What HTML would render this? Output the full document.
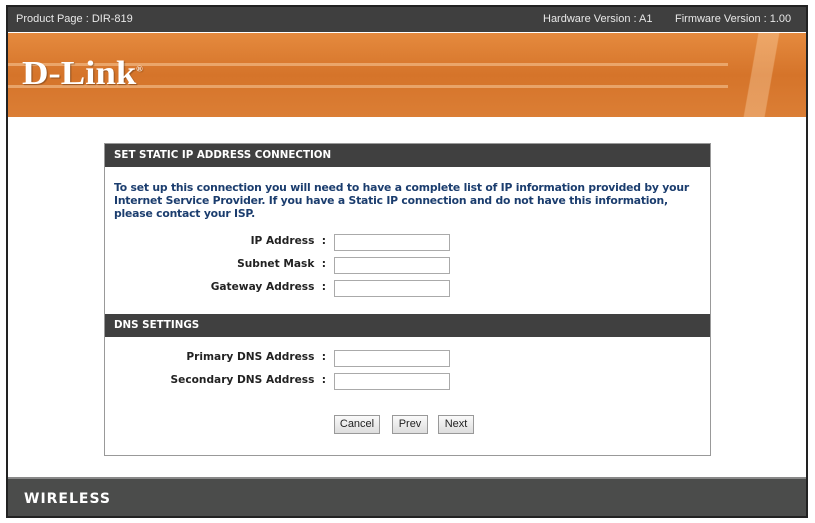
<!DOCTYPE html>
<html><head><style>
*{margin:0;padding:0;box-sizing:border-box}
body{width:815px;height:523px;background:#fff;position:relative;font-family:"DejaVu Sans","Liberation Sans",sans-serif;overflow:hidden}
.frame{position:absolute;left:6px;top:5px;width:802px;height:513px;border:2px solid #222;background:#fff}
.top{position:absolute;left:0;top:0;width:798px;height:25px;background:#3f3f3f;color:#e8e8e8;font:11px "Liberation Sans Narrow","Liberation Sans",sans-serif;line-height:25px}
.band{position:absolute;left:0;top:26px;width:798px;height:84px;background:linear-gradient(#e58a3e,#d5742a 50%,#db7e35)}
.ln{position:absolute;left:0;height:3px;background:rgba(255,220,180,.45)}
.logo{position:absolute;left:14px;top:22px;font:bold 34px "Liberation Serif",serif;color:#fff;letter-spacing:0;transform:scaleX(1.08);transform-origin:left;text-shadow:1px 1px 1px rgba(0,0,0,.3)}
.box{position:absolute;left:96px;top:136px;width:607px;height:313px;border:1px solid #999}
.hd{position:absolute;left:0;width:605px;height:23px;background:#404040;color:#fff;font-weight:bold;font-size:10.3px;line-height:23px;padding-left:9px}
.p{position:absolute;left:9px;top:37px;color:#1b3d6e;font-weight:bold;font-size:10.8px;line-height:13px;width:590px;letter-spacing:-.2px}
.lbl{position:absolute;right:384px;font-weight:bold;font-size:10.6px;color:#222;white-space:nowrap}
.in{position:absolute;left:229px;width:116px;height:17px;border:1px solid #aaa;background:#fff}
.btn{position:absolute;top:271px;height:19px;border:1px solid #999;background:linear-gradient(#fafafa,#ddd);font:11px "Liberation Sans Narrow","Liberation Sans",sans-serif;line-height:17px;text-align:center;color:#222}
.foot{position:absolute;left:0;top:470px;width:798px;height:39px;background:#4b4c4b;border-top:2px solid #888}
.w{position:absolute;left:16px;top:12px;color:#fff;font:bold 14px "DejaVu Sans",sans-serif;letter-spacing:1px}
</style></head><body>
<div class="frame">
<div class="top"><span style="margin-left:8px">Product Page : DIR-819</span><span style="position:absolute;left:535px">Hardware Version : A1</span><span style="position:absolute;left:667px">Firmware Version : 1.00</span></div>
<div class="band">
<div class="ln" style="top:30px;width:720px"></div>
<div class="ln" style="top:52px;width:720px"></div>
<div style="position:absolute;right:0;top:0;width:90px;height:84px;background:linear-gradient(100deg,transparent 40%,rgba(255,220,180,.35) 41%,rgba(255,220,180,.35) 60%,transparent 61%)"></div>
<div class="logo">D-Link<sup style="font-size:8px">®</sup></div>
</div>
<div class="box">
<div class="hd" style="top:0">SET STATIC IP ADDRESS CONNECTION</div>
<div class="p">To set up this connection you will need to have a complete list of IP information provided by your Internet Service Provider. If you have a Static IP connection and do not have this information, please contact your ISP.</div>
<div class="lbl" style="top:91px">IP Address &nbsp;:</div><div class="in" style="top:90px"></div>
<div class="lbl" style="top:114px">Subnet Mask &nbsp;:</div><div class="in" style="top:113px"></div>
<div class="lbl" style="top:137px">Gateway Address &nbsp;:</div><div class="in" style="top:136px"></div>
<div class="hd" style="top:170px">DNS SETTINGS</div>
<div class="lbl" style="top:207px">Primary DNS Address &nbsp;:</div><div class="in" style="top:206px"></div>
<div class="lbl" style="top:230px">Secondary DNS Address &nbsp;:</div><div class="in" style="top:229px"></div>
<div class="btn" style="left:229px;width:46px">Cancel</div>
<div class="btn" style="left:287px;width:36px">Prev</div>
<div class="btn" style="left:333px;width:36px">Next</div>
</div>
<div class="foot"><div class="w">WIRELESS</div></div>
</div>
</body></html>
